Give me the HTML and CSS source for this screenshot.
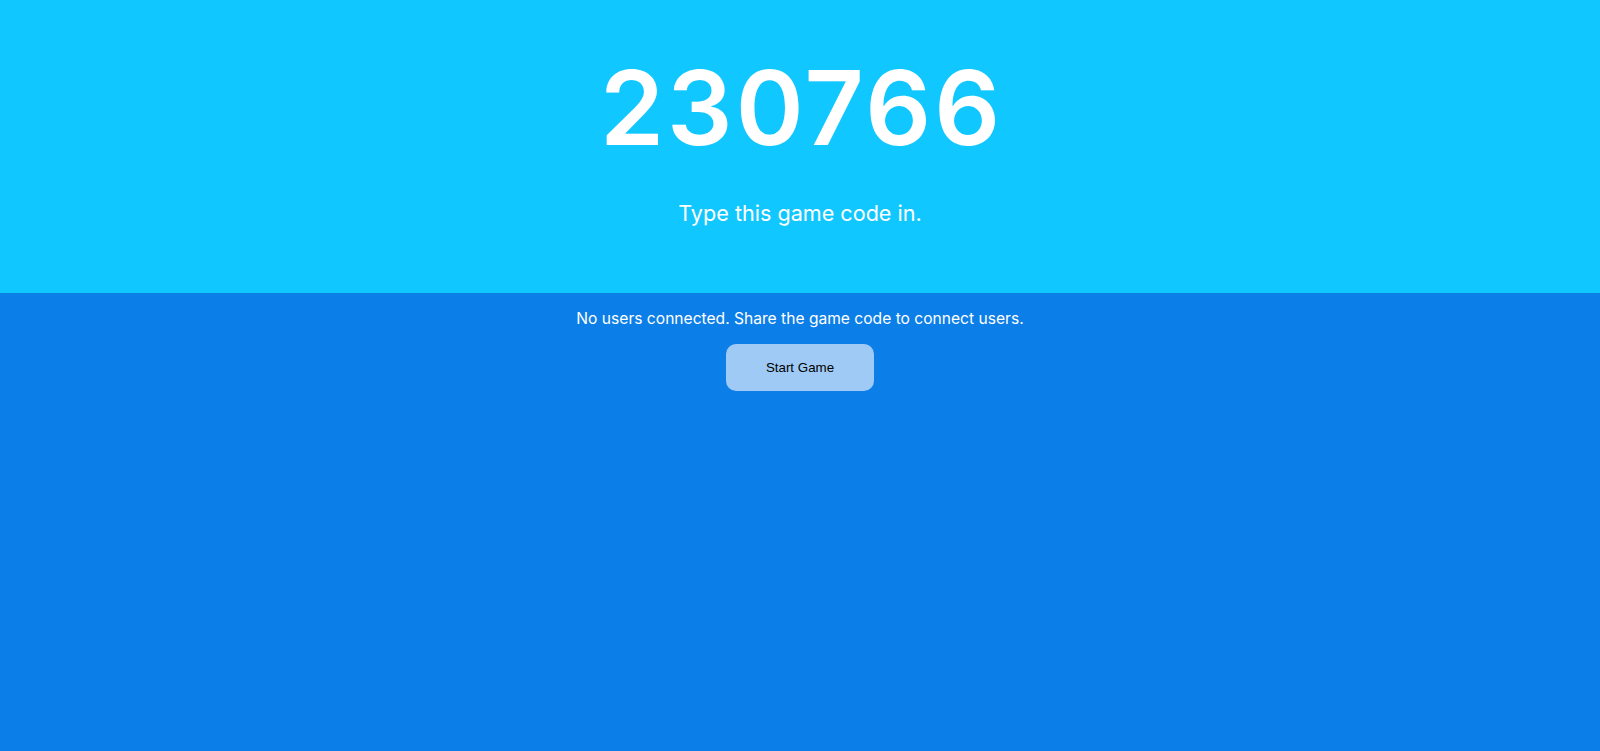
FILE: index.html
```html
<!DOCTYPE html>
<html>
<head>
<meta charset="utf-8">
<link rel="stylesheet" href="styles.css">
</head>
<body>
<header class="hero">
  <div class="code">230766</div>
  <div class="hint">Type this game code in.</div>
</header>
<main class="lobby">
  <p class="status">No users connected. Share the game code to connect users.</p>
  <button class="start">Start Game</button>
</main>
</body>
</html>
```
FILE: styles.css
```css
html, body {
  margin: 0;
  padding: 0;
  height: 100%;
}
body {
  font-family: Inter, "Noto Sans", sans-serif;
  background: #0c7ee8;
  color: #fff;
  display: flex;
  flex-direction: column;
}
.hero {
  background: #10c8ff;
  height: 293px;
  display: flex;
  flex-direction: column;
  align-items: center;
  box-sizing: border-box;
  padding-top: 44px;
}
.code {
  font-size: 103px;
  font-weight: 600;
  line-height: 128px;
  letter-spacing: 3px;
  padding-left: 3px;
}
.hint {
  margin-top: 26px;
  font-size: 21.6px;
  line-height: 30px;
}
.lobby {
  flex: 1;
  display: flex;
  flex-direction: column;
  align-items: center;
}
.status {
  margin: 16px 0 0;
  font-size: 15.6px;
  line-height: 20px;
}
.start {
  margin-top: 15px;
  width: 148px;
  height: 47px;
  border: none;
  border-radius: 10px;
  background: #9fcaf5;
  color: #000;
  font-family: Arial, "Liberation Sans", sans-serif;
  font-size: 13.333px;
}
```
